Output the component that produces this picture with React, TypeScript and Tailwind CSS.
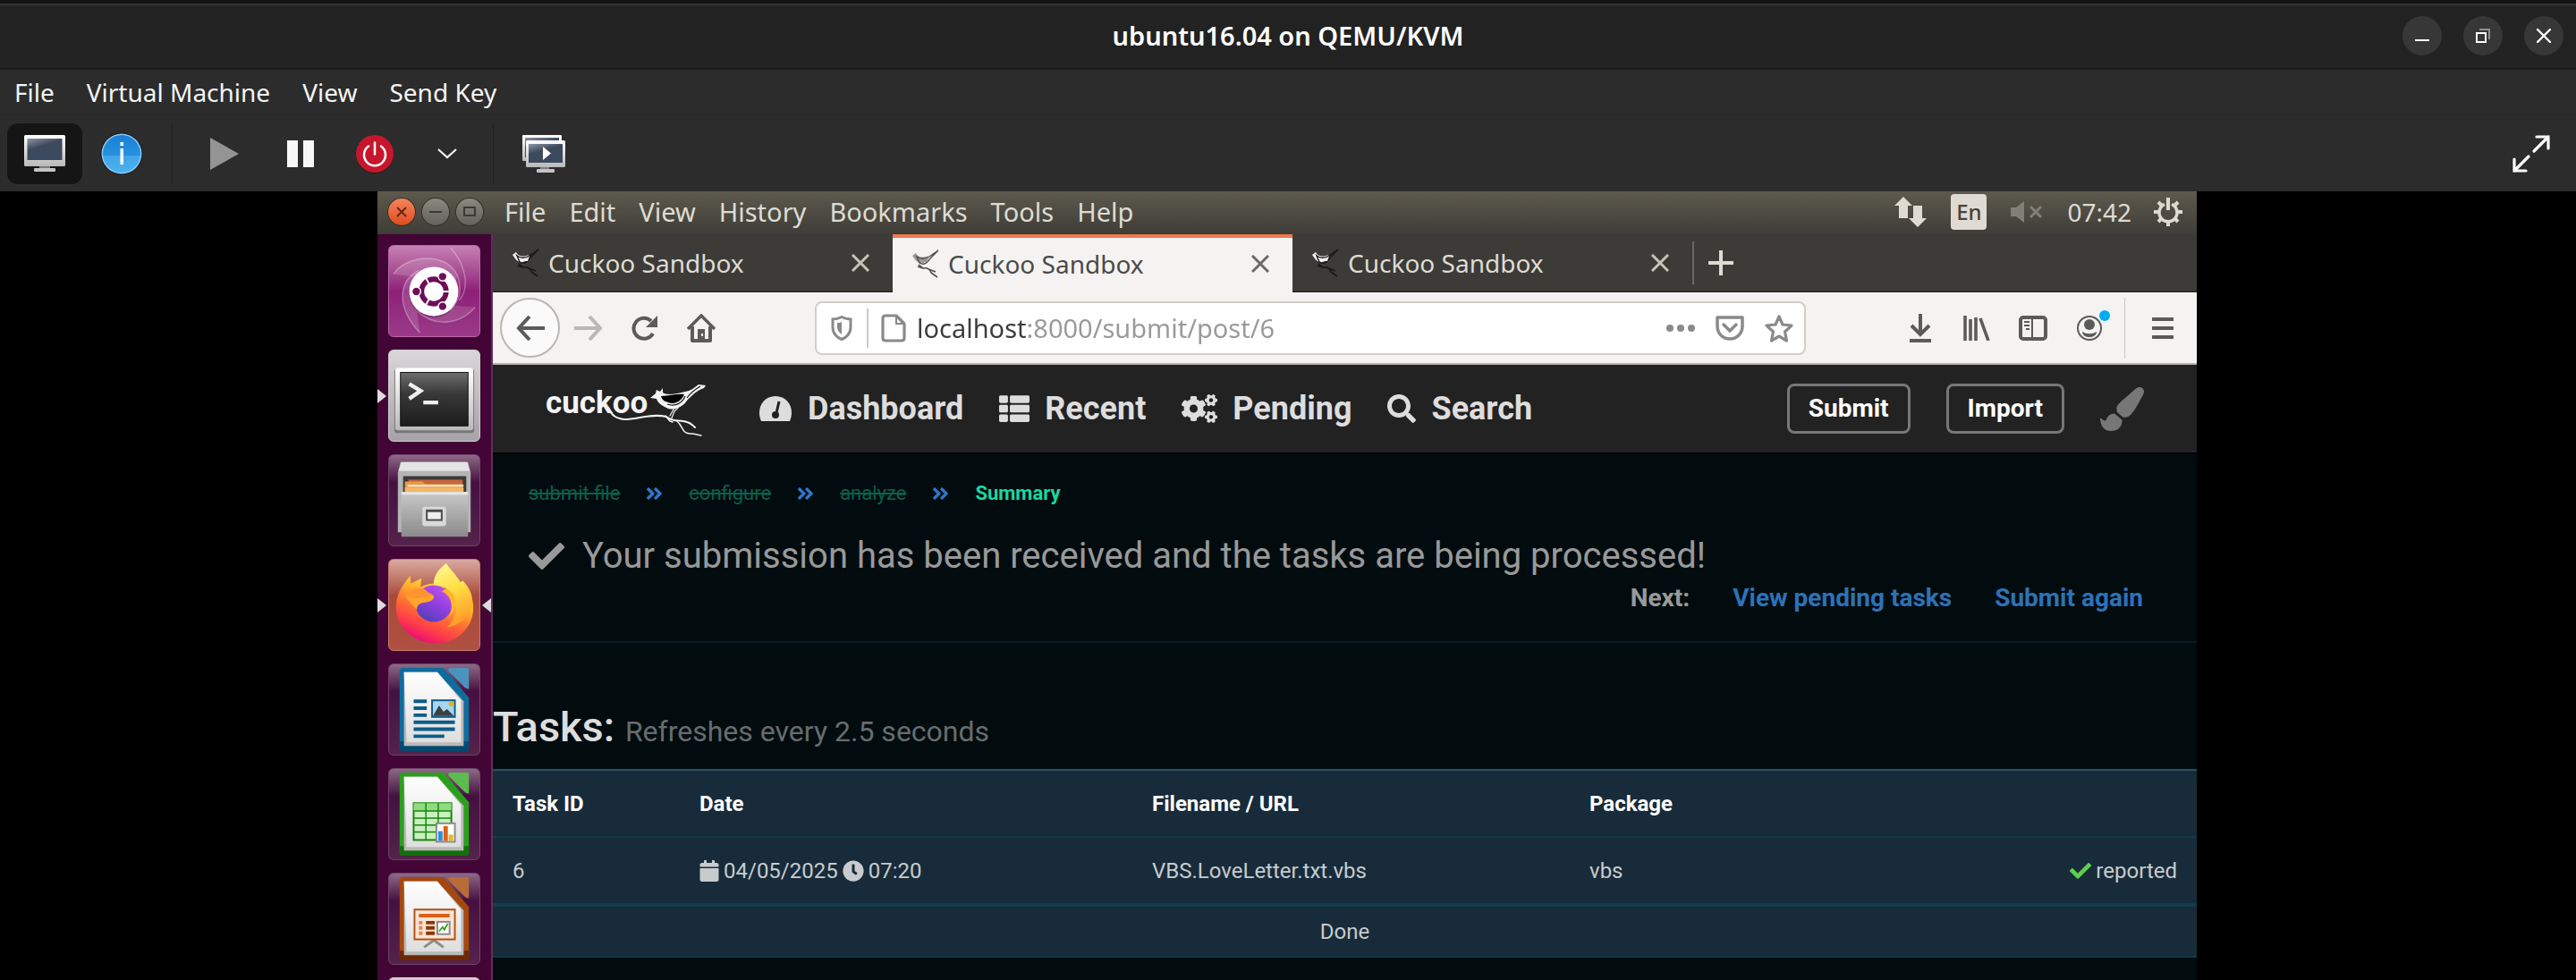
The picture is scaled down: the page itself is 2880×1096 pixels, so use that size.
import React from "react";
import {
  FaAngleDoubleRight,
  FaCalendar,
  FaCheck,
  FaClock,
  FaCogs,
  FaPaintBrush,
  FaSearch,
  FaThList,
} from "react-icons/fa";

/* ---------- host window icons ---------- */

function Gradients() {
  return (
    <svg className="absolute h-0 w-0" aria-hidden="true">
      <defs>
        <linearGradient id="frame" x1="0" y1="0" x2="0" y2="1">
          <stop offset="0" stopColor="#ffffff" />
          <stop offset="1" stopColor="#b9b9b9" />
        </linearGradient>
        <linearGradient id="screen" x1="0" y1="0" x2="0.5" y2="1">
          <stop offset="0" stopColor="#8d96a3" />
          <stop offset="0.4" stopColor="#465264" />
          <stop offset="0.45" stopColor="#3d495b" />
          <stop offset="1" stopColor="#3b4a61" />
        </linearGradient>
        <linearGradient id="info" x1="0" y1="0" x2="0" y2="1">
          <stop offset="0" stopColor="#1b7fd6" />
          <stop offset="0.54" stopColor="#2792e0" />
          <stop offset="0.56" stopColor="#42a5e8" />
          <stop offset="1" stopColor="#4db2ee" />
        </linearGradient>
        <linearGradient id="paper" x1="0" y1="0" x2="0" y2="1">
          <stop offset="0" stopColor="#ffffff" />
          <stop offset="1" stopColor="#dedede" />
        </linearGradient>
        <linearGradient id="steel" x1="0" y1="0" x2="0" y2="1">
          <stop offset="0" stopColor="#c9c9c9" />
          <stop offset="1" stopColor="#8a8a8a" />
        </linearGradient>
        <linearGradient id="term" x1="0" y1="0" x2="0" y2="1">
          <stop offset="0" stopColor="#6e6e6e" />
          <stop offset="0.4" stopColor="#383838" />
          <stop offset="1" stopColor="#1c1c1c" />
        </linearGradient>
        <linearGradient id="fox" x1="0.8" y1="0" x2="0.3" y2="1">
          <stop offset="0" stopColor="#fff36b" />
          <stop offset="0.35" stopColor="#ffb52c" />
          <stop offset="0.6" stopColor="#ff6a35" />
          <stop offset="0.8" stopColor="#ff3a4a" />
          <stop offset="1" stopColor="#e6087c" />
        </linearGradient>
        <linearGradient id="flame" x1="0" y1="0" x2="0.3" y2="1">
          <stop offset="0" stopColor="#fffb9a" />
          <stop offset="0.5" stopColor="#ffdf45" />
          <stop offset="1" stopColor="#ffa02a" />
        </linearGradient>
        <linearGradient id="globe" x1="0.8" y1="0" x2="0.2" y2="1">
          <stop offset="0" stopColor="#c452e8" />
          <stop offset="0.5" stopColor="#8f3fe0" />
          <stop offset="1" stopColor="#4a3fb0" />
        </linearGradient>
      </defs>
    </svg>
  );
}

function MonitorIcon() {
  return (
    <svg viewBox="0 0 48 42" className="h-[42px] w-12">
      <path d="M18 35h12v3H18z" fill="#7d7d7d" />
      <rect x="12" y="37" width="24" height="4" rx="1" fill="#c4c4c4" />
      <rect x="1" y="0" width="46" height="35" rx="1.500" fill="url(#frame)" />
      <rect x="4.500" y="4" width="39" height="24" fill="url(#screen)" />
    </svg>
  );
}

function InfoIcon() {
  return (
    <svg viewBox="0 0 48 48" className="size-12">
      <circle cx="24" cy="24" r="23.500" fill="#16191c" />
      <circle cx="24" cy="24" r="22.500" fill="#8cc7f1" />
      <circle cx="24" cy="24" r="21" fill="url(#info)" />
      <path d="M22.500 11h3.500v4h-3.500zM22.500 18h3.500v18h-3.500z" fill="#fff" />
    </svg>
  );
}

function PowerIcon() {
  return (
    <svg viewBox="0 0 44 44" className="size-11">
      <circle cx="22" cy="23" r="21" fill="#1d1d1d" />
      <circle cx="22" cy="22" r="21" fill="#c7162b" />
      <g fill="none" stroke="#fff" strokeWidth="2.500" strokeLinecap="round">
        <path d="M15 13.500a12 12 0 1 0 14 0" />
        <path d="M22 9.500v13" />
      </g>
    </svg>
  );
}

function MonitorsIcon() {
  return (
    <svg viewBox="0 0 48 42" className="h-[42px] w-12">
      <rect x="0" y="0" width="44" height="29" rx="1" fill="url(#frame)" />
      <rect x="3" y="3" width="38" height="22" fill="url(#screen)" />
      <path d="M20 36h10v3H20z" fill="#7d7d7d" />
      <rect x="16" y="38" width="20" height="4" rx="1" fill="#c4c4c4" />
      <rect x="4" y="6" width="44" height="30" rx="1.500" fill="url(#frame)" />
      <rect x="7" y="10" width="38" height="21" fill="url(#screen)" />
      <path d="M23 13l9 7.500-9 7.500z" fill="#fff" />
    </svg>
  );
}

/* ---------- bird drawings ---------- */

function CuckooLogo() {
  return (
    <svg viewBox="0 -3 182 62" className="h-[62px] w-[182px]" role="img" aria-label="cuckoo">
      <text x="0" y="33" fontFamily="Roboto" fontWeight="700" fontSize="35" fill="#f4f4f4">
        cuckoo
      </text>
      <g fill="none" stroke="#f4f4f4" strokeLinecap="round" strokeLinejoin="round">
        <path d="M70 27C74 36 79 39 88 40C103 40 118 33 135 37C144 44 150 40 158 43C162 44 165 47 167 49" strokeWidth="2" />
        <path d="M147 42C154 48 152 56 162 56C168 56 171 58 174 58M134 36l5 6 3 1" strokeWidth="1.500" />
        <path d="M148 27l-4 4-4 10M144 27l-5 9" strokeWidth="1.200" />
      </g>
      <path
        d="M117 16l6-5 1-4 4 2 3-4 0 5C136 14 146 11 156 9C162 8 166 5 171 1l8 1-2 3C168 8 163 14 158 19C153 27 143 30 137 28C130 25 125 21 124 17z"
        fill="#f4f4f4"
      />
      <path d="M129 14C138 14 147 11 155 12C152 20 143 24 137 21C133 20 130 18 129 14z" fill="#050505" />
      <path d="M136 23C145 26 153 22 156 14M158 16C163 9 168 6 173 3" fill="none" stroke="#151515" strokeWidth="1.200" />
    </svg>
  );
}

function Favicon({ active }: { active: boolean }) {
  const body = active ? "#9a9a9a" : "#f2f2f2";
  const dark = active ? "#4c4c4c" : "#171717";
  return (
    <svg viewBox="0 0 32 32" className="h-8 w-8 shrink-0" aria-hidden="true">
      <path d="M2 7l4-3 2 3c4 2 8 2 12 0-2 6-5 9-9 8-5-1-6-4-9-8z" fill={body} />
      <path d="M7 8c4 3 9 3 14 0l10-7-9 9c-3 5-7 8-12 5z" fill="none" stroke={dark} strokeWidth="1.400" />
      <path d="M9 17l5 4c6-1 8 2 9 5l7 5M14 21l-6-2M20 22l8 3" fill="none" stroke={dark} strokeWidth="1.600" />
      <path d="M10 14l7-2 4-4-2 6z" fill={body} />
    </svg>
  );
}

/* ---------- launcher icons, drawn on a 103 unit tile ---------- */

const tileSvg = "block h-full w-full";

function DashIcon() {
  return (
    <svg viewBox="0 0 103 103" className={tileSvg}>
      <g fill="none" stroke="#fff" strokeOpacity="0.300" strokeWidth="1.500">
        <path d="M5 32C20 10 66 6 78 34C84 50 80 62 70 74" />
        <path d="M70 2C88 22 92 48 80 62" />
        <path d="M35 99C8 70 10 40 34 28" />
        <path d="M98 70C78 92 50 92 32 74" />
      </g>
      <path d="M5 32C20 10 66 6 78 34L72 52 34 36z" fill="#fff" fillOpacity="0.150" />
      <path d="M35 99C8 70 10 40 34 28L30 60z" fill="#fff" fillOpacity="0.150" />
      <path d="M98 70C78 92 50 92 32 74l40-6z" fill="#fff" fillOpacity="0.120" />
      <circle cx="51" cy="54" r="28" fill="#000" fillOpacity="0.200" />
      <circle cx="51" cy="52" r="28" fill="#fff" />
      <circle cx="51" cy="52" r="14" fill="none" stroke="#6c0f58" strokeWidth="6" />
      <path d="M60 52h10M46 44l-5-9M46 60l-5 9" stroke="#fff" strokeWidth="2" />
      <g fill="#6c0f58" stroke="#fff" strokeWidth="1.500">
        <circle cx="31" cy="52" r="5" />
        <circle cx="61" cy="35" r="5" />
        <circle cx="61" cy="69" r="5" />
      </g>
    </svg>
  );
}

function TerminalIcon() {
  return (
    <svg viewBox="0 0 103 103" className={tileSvg}>
      <rect x="6" y="21" width="91" height="73" rx="3" fill="#777" />
      <rect x="7" y="20" width="89" height="71" rx="3" fill="url(#frame)" />
      <rect x="13" y="25" width="77" height="61" fill="url(#term)" stroke="#111" />
      <path d="M23 38l13 8-13 9" fill="none" stroke="#f0f0f0" strokeWidth="4.500" />
      <path d="M39 57h17v4.500H39z" fill="#f0f0f0" />
    </svg>
  );
}

function FilesIcon() {
  return (
    <svg viewBox="0 0 103 103" className={tileSvg}>
      <path d="M13 8h77l3 12v68H10V20z" fill="#b5b5b5" />
      <path d="M14 8h75l3 10H11z" fill="#e4e4e4" />
      <path d="M16 24h72v20H16z" fill="#3a3a3a" />
      <path d="M22 28h62v16H22z" fill="#c8643a" />
      <path d="M18 30h20l3 3h43v10H18z" fill="#e89a4c" />
      <path d="M21 34h64v2H21z" fill="#f5ead9" />
      <path d="M18 37h67v6H18z" fill="#f3b866" />
      <path d="M14 42h76v51H14z" fill="url(#steel)" />
      <path d="M14 42h76v3H14z" fill="#e6e6e6" />
      <rect x="38" y="59" width="27" height="22" rx="3" fill="#d9d9d9" />
      <rect x="42" y="62" width="19" height="13" fill="#4b4b4b" />
      <rect x="44" y="65" width="15" height="8" fill="#efefef" />
    </svg>
  );
}

function FirefoxIcon() {
  return (
    <svg viewBox="0 0 103 103" className={tileSvg}>
      <path
        d="M8 56C7 42 14 30 24 18l1 9 12-6-1 10C48 25 60 26 66 36L84 24C96 38 99 56 93 70C86 86 70 96 51 95C28 94 9 78 8 56z"
        fill="url(#fox)"
      />
      <path
        d="M65 4C52 14 50 24 51 30C62 28 68 34 70 40C80 50 78 66 66 77C84 74 94 62 95 48C95 38 90 30 84 24l1 9C80 20 72 14 65 4z"
        fill="url(#flame)"
      />
      <circle cx="51" cy="50" r="21" fill="url(#globe)" />
      <path d="M60 36c10 4 14 16 9 28 10-8 9-24-3-31z" fill="#ffb52c" />
      <path d="M18 42c10 2 18-4 33-1 1 5-5 7-12 8-5 1-8 4-7 8C26 52 24 47 18 42z" fill="#ffa62b" />
      <path d="M18 42C24 32 34 30 41 34c3 3 6 5 10 6-8 2-16 4-24 4z" fill="#ff9330" />
    </svg>
  );
}

function DocShape({ main, deep, fold }: { main: string; deep: string; fold: string }) {
  return (
    <>
      <path d="M16 4h46l29 34v57q0 4-4 4H16q-4 0-4-4V8q0-4 4-4z" fill={main} />
      <path d="M12 88h79v7q0 4-4 4H16q-4 0-4-4z" fill={deep} />
      <path d="M70 4h19q2 0 2 2v22q-3 0-5-2L68 8q-2-4 2-4z" fill={fold} />
      <path d="M17 9h38l30 33v51H17z" fill="#b9b9b9" />
      <path d="M17 9h38l27 32v48H20z" fill="url(#paper)" />
    </>
  );
}

function WriterIcon() {
  return (
    <svg viewBox="0 0 103 103" className={tileSvg}>
      <DocShape main="#0e6c9e" deep="#044a70" fold="#4a93bd" />
      <path d="M28 40h15v4H28zM28 48h15v4H28zM28 56h15v4H28zM28 64h47v4H28zM28 72h47v4H28zM28 80h35v4H28z" fill="#0b5c88" />
      <rect x="49" y="41" width="26" height="19" fill="#a5d5f2" stroke="#0b5c88" strokeWidth="2" />
      <path d="M50 59l7-12 5 7 4-3 8 8z" fill="#3f3f3f" />
      <circle cx="71" cy="45" r="3" fill="#d9b32e" />
    </svg>
  );
}

function CalcIcon() {
  return (
    <svg viewBox="0 0 103 103" className={tileSvg}>
      <DocShape main="#2ba01c" deep="#12700a" fold="#5dbb4f" />
      <rect x="28" y="39" width="43" height="42" fill="#c9f0bf" stroke="#17850d" strokeWidth="2" />
      <path d="M28 39h43v9H28z" fill="#8edb80" />
      <path d="M28 48h43M28 56h43M28 64h43M28 72h43M42 39v42M56 39v42" stroke="#17850d" strokeWidth="1.500" fill="none" />
      <rect x="54" y="62" width="21" height="21" fill="#fff" stroke="#8a8a8a" strokeWidth="2" />
      <path d="M56 71h5v11h-5z" fill="#2f8fd8" />
      <path d="M62 65h5v17h-5z" fill="#e06018" />
      <path d="M68 75h5v7h-5z" fill="#e8b820" />
    </svg>
  );
}

function ImpressIcon() {
  return (
    <svg viewBox="0 0 103 103" className={tileSvg}>
      <DocShape main="#a5480f" deep="#6b2a02" fold="#b86c3a" />
      <path d="M51 76l-11 8M51 76l11 8" stroke="#8d8d8d" strokeWidth="3" />
      <rect x="29" y="41" width="46" height="34" fill="#fbe4d6" stroke="#b44f12" strokeWidth="2" />
      <path d="M34 46h35v4H34z" fill="#d95e16" />
      <path d="M34 54h4v4h-4zM34 60h4v4h-4zM34 66h4v4h-4z" fill="#e4844c" />
      <path d="M42 54h10v4H42zM42 60h10v4H42zM42 66h10v4H42z" fill="#8a3606" />
      <rect x="55" y="55" width="14" height="14" fill="#fff" stroke="#8a8a8a" strokeWidth="2" />
      <path d="M57 66l4-5 2 3 4-7" fill="none" stroke="#32a020" strokeWidth="1.800" />
    </svg>
  );
}

type Launch = {
  name: string;
  icon: React.ReactNode;
  tile: string;
  running?: boolean;
  focused?: boolean;
};

const glass = "bg-linear-to-b from-[#8d6a87] via-[#451040] via-30% to-[#54224b] border-[#6d4567]";

const launchers: Launch[] = [
  { name: "Search your computer", icon: <DashIcon />, tile: "bg-linear-to-b from-[#c67fb4] via-[#8e1f78] via-50% to-[#9a3a88] border-[#b868a8]" },
  { name: "Terminal", icon: <TerminalIcon />, tile: "bg-linear-to-b from-[#dad7da] to-[#a7a2a8] border-[#d0ccd0]", running: true },
  { name: "Files", icon: <FilesIcon />, tile: glass },
  { name: "Firefox Web Browser", icon: <FirefoxIcon />, tile: "bg-linear-to-b from-[#d9aaa0] via-[#a84a3a] via-40% to-[#b05042] border-[#c47b6c]", running: true, focused: true },
  { name: "LibreOffice Writer", icon: <WriterIcon />, tile: glass },
  { name: "LibreOffice Calc", icon: <CalcIcon />, tile: glass },
  { name: "LibreOffice Impress", icon: <ImpressIcon />, tile: glass },
  { name: "Ubuntu Software", icon: null, tile: "bg-[#d8c4d2] border-[#e0d0dc]" },
];

function Launcher() {
  return (
    <aside className="flex w-[129px] shrink-0 flex-col gap-[14px] overflow-hidden border-r-2 border-[#5e2f57] bg-[#420535] pt-3">
      {launchers.map((l) => (
        <div key={l.name} className="relative flex shrink-0 pl-3">
          {l.running && (
            <svg viewBox="0 0 10 16" className="absolute top-11 left-0 h-4 w-[10px]">
              <path d="M0 0l10 8-10 8z" fill="#dcdcdc" />
            </svg>
          )}
          <button type="button" aria-label={l.name} className={`size-[103px] overflow-hidden rounded-md border ${l.tile}`}>
            {l.icon}
          </button>
          {l.focused && (
            <svg viewBox="0 0 10 16" className="absolute top-11 right-0 h-4 w-[10px]">
              <path d="M10 0L0 8l10 8z" fill="#dcdcdc" />
            </svg>
          )}
        </div>
      ))}
    </aside>
  );
}

/* ---------- host chrome ---------- */

const roundBtn = "flex size-11 items-center justify-center rounded-full bg-[#373737]";

function HostTitleBar() {
  return (
    <header className="grid h-[78px] shrink-0 grid-cols-[1fr_auto_1fr] items-center border-t-4 border-b-2 border-t-[#141414] border-b-[#1a1a1a] bg-[#222] shadow-[inset_0_2px_0_#333]">
      <span />
      <h1 className="text-[29px] leading-10 font-semibold text-white">ubuntu16.04 on QEMU/KVM</h1>
      <div className="flex justify-end gap-6 pr-[14px]">
        <button type="button" aria-label="Minimize" className={roundBtn}>
          <svg viewBox="0 0 16 16" className="size-4">
            <path d="M0 12h16v2H0z" fill="#fff" />
          </svg>
        </button>
        <button type="button" aria-label="Restore" className={roundBtn}>
          <svg viewBox="0 0 16 16" className="size-4">
            <path d="M4 0h12v12h-2V2H4z" fill="#8f8f8f" />
            <path d="M1 5h10v10H1z" fill="none" stroke="#fff" strokeWidth="2" />
          </svg>
        </button>
        <button type="button" aria-label="Close" className={roundBtn}>
          <svg viewBox="0 0 16 16" className="size-4">
            <path d="M1 1l14 14M15 1L1 15" stroke="#fff" strokeWidth="2.400" strokeLinecap="round" />
          </svg>
        </button>
      </div>
    </header>
  );
}

function HostMenu() {
  return (
    <nav className="flex h-[52px] shrink-0 items-center gap-9 border-b-2 border-[#282828] bg-[#2c2c2c] pl-4 text-[28px] leading-9 text-[#f4f4f4]">
      {["File", "Virtual Machine", "View", "Send Key"].map((m) => (
        <button key={m} type="button">
          {m}
        </button>
      ))}
    </nav>
  );
}

function HostToolbar() {
  return (
    <div className="flex h-[84px] shrink-0 items-center bg-[#2c2c2c] pr-7 pl-2">
      <button type="button" aria-label="Show the graphical console" className="flex h-[68px] w-[84px] items-center justify-center rounded-xl bg-[#151515]">
        <MonitorIcon />
      </button>
      <button type="button" aria-label="Show virtual hardware details" className="ml-5">
        <InfoIcon />
      </button>
      <span className="ml-8 h-[68px] w-px bg-[#222]" />
      <button type="button" aria-label="Run" className="ml-[42px]">
        <svg viewBox="0 0 32 36" className="h-9 w-8">
          <path d="M0 0l32 18L0 36z" fill="#949494" />
        </svg>
      </button>
      <button type="button" aria-label="Pause" className="ml-[54px]">
        <svg viewBox="0 0 30 30" className="size-[30px]">
          <path d="M0 0h12v30H0zM18 0h12v30H18z" fill="#f7f7f7" />
        </svg>
      </button>
      <button type="button" aria-label="Shut down" className="ml-[46px]">
        <PowerIcon />
      </button>
      <button type="button" aria-label="Shut down options" className="ml-12">
        <svg viewBox="0 0 22 12" className="h-3 w-[22px]">
          <path d="M1 1l10 9L21 1" fill="none" stroke="#f4f4f4" strokeWidth="2.200" />
        </svg>
      </button>
      <span className="ml-10 h-[68px] w-px bg-[#222]" />
      <button type="button" aria-label="Manage snapshots" className="ml-8">
        <MonitorsIcon />
      </button>
      <button type="button" aria-label="Fullscreen" className="ml-auto">
        <svg viewBox="0 0 44 44" className="size-11">
          <g fill="none" stroke="#fff" strokeWidth="3.200" strokeLinecap="round" strokeLinejoin="miter">
            <path d="M28 3h13v13M41 3L25 19" />
            <path d="M3 28v13h13M3 41l16-16" />
          </g>
        </svg>
      </button>
    </div>
  );
}

/* ---------- guest desktop ---------- */

const guestBtn = "flex size-[30px] items-center justify-center rounded-full shadow-[0_0_0_1px_#2f2e29]";

function GuestPanel() {
  return (
    <div className="flex h-12 shrink-0 items-center bg-linear-to-b from-[#5d5a4d] to-[#3e3d38] pr-4 pb-[2px] pl-3 text-[#dfdbd2]">
      <div className="flex gap-2">
        <button type="button" aria-label="Close" className={`${guestBtn} bg-linear-to-b from-[#f4845c] to-[#dd4a19]`}>
          <svg viewBox="0 0 12 12" className="size-3">
            <path d="M1 1l10 10M11 1L1 11" stroke="#6a240c" strokeWidth="2" />
          </svg>
        </button>
        <button type="button" aria-label="Minimize" className={`${guestBtn} bg-linear-to-b from-[#8a8880] to-[#63625b]`}>
          <svg viewBox="0 0 14 12" className="h-3 w-[14px]">
            <path d="M0 6h14" stroke="#3a3934" strokeWidth="2" />
          </svg>
        </button>
        <button type="button" aria-label="Maximize" className={`${guestBtn} bg-linear-to-b from-[#8a8880] to-[#63625b]`}>
          <svg viewBox="0 0 14 12" className="h-3 w-[14px]">
            <path d="M1 1h12v9H1z" fill="none" stroke="#3a3934" strokeWidth="2" />
          </svg>
        </button>
      </div>
      <nav className="ml-6 flex gap-[26px] text-[29px] leading-10">
        {["File", "Edit", "View", "History", "Bookmarks", "Tools", "Help"].map((m) => (
          <button key={m} type="button">
            {m}
          </button>
        ))}
      </nav>
      <div className="ml-auto flex items-center gap-[25px]">
        <div className="flex items-center gap-[27px]">
          <svg viewBox="0 0 36 34" className="h-[34px] w-9" aria-label="Network">
            <path d="M10 0l10 10h-5v14H5V10H0zM26 34L16 24h5V10h10v14h5z" fill="#dfdbd2" />
          </svg>
          <span className="flex h-10 w-10 items-center justify-center rounded bg-[#dfdbd2] text-[24px] leading-10 font-medium text-[#45443e]">En</span>
          <svg viewBox="0 0 36 24" className="h-6 w-9" aria-label="Sound muted">
            <path d="M0 7h6l9-7v24l-9-7H0z" fill="#827f77" />
            <path d="M22 6l12 12M34 6L22 18" stroke="#827f77" strokeWidth="3" />
          </svg>
          <time className="text-[28px] leading-10">07:42</time>
        </div>
        <svg viewBox="0 0 32 32" className="size-8" aria-label="System">
          <g fill="none" stroke="#dfdbd2">
            <path d="M12 7.500a10 10 0 1 0 8 0" strokeWidth="3.500" />
            <path d="M16 0v14" strokeWidth="4" />
            <path d="M0 16h6M26 16h6M16 26v6M5 5l4 4M27 5l-4 4M5 27l4-4M27 27l-4-4" strokeWidth="4" />
          </g>
        </svg>
      </div>
    </div>
  );
}

function TabStrip() {
  return (
    <div className="flex h-[65px] shrink-0 items-stretch bg-[#3c3b37]">
      {[0, 1, 2].map((i) => {
        const active = i === 1;
        return (
          <div
            key={i}
            className={
              active
                ? "flex w-[447px] items-center border-t-4 border-[#f2784b] bg-[#f4f3f1] pr-[26px] pb-1 pl-5 text-[#4a4a4a]"
                : "flex w-[447px] items-center border-b-2 border-[#2c2b28] pr-[26px] pl-5 text-[#dfdbd2]"
            }
          >
            <Favicon active={active} />
            <button type="button" className="ml-[10px] flex-1 text-left text-[28px] leading-10">
              Cuckoo Sandbox
            </button>
            <button type="button" aria-label="Close tab">
              <svg viewBox="0 0 20 20" className="size-5">
                <path d="M1 1l18 18M19 1L1 19" stroke={active ? "#6a6a6a" : "#c8c3ba"} strokeWidth="3" />
              </svg>
            </button>
          </div>
        );
      })}
      <div className="flex flex-1 items-center border-b-2 border-[#2c2b28]">
        <span className="h-12 w-[2px] bg-[#6a6963]" />
        <button type="button" aria-label="New tab" className="ml-4">
          <svg viewBox="0 0 28 28" className="size-7">
            <path d="M14 0v28M0 14h28" stroke="#dfdbd2" strokeWidth="4" />
          </svg>
        </button>
      </div>
    </div>
  );
}

const toolBtn = "flex w-[63px] shrink-0 items-center justify-center";

function BrowserToolbar() {
  return (
    <div className="flex h-[81px] shrink-0 items-center border-b-2 border-[#b5b2ad] bg-[#f4f3f1] pl-2">
      <button type="button" aria-label="Back" className="flex size-[67px] items-center justify-center rounded-full border-2 border-[#b9b7b4] bg-[#fafafa]">
        <svg viewBox="0 0 32 28" className="h-7 w-8">
          <path d="M15 1L3 14l12 13M3 14h29" fill="none" stroke="#5b5b5b" strokeWidth="4" />
        </svg>
      </button>
      <button type="button" aria-label="Forward" className={toolBtn}>
        <svg viewBox="0 0 32 28" className="h-7 w-8">
          <path d="M17 1l12 13-12 13M29 14H0" fill="none" stroke="#b9b8b6" strokeWidth="4" />
        </svg>
      </button>
      <button type="button" aria-label="Reload" className={toolBtn}>
        <svg viewBox="0 0 30 28" className="h-7 w-[30px]">
          <path d="M24 20A11.500 11.500 0 1 1 22 6" fill="none" stroke="#5b5b5b" strokeWidth="4" />
          <path d="M29 0v13H16z" fill="#5b5b5b" />
        </svg>
      </button>
      <button type="button" aria-label="Home" className={toolBtn}>
        <svg viewBox="0 0 32 32" className="size-8">
          <path d="M1 17L16 2l15 15" fill="none" stroke="#5b5b5b" strokeWidth="3.500" />
          <path d="M6 14v16h20V14" fill="none" stroke="#5b5b5b" strokeWidth="4" strokeLinejoin="round" />
          <path d="M12 17h8v14h-8z" fill="#5b5b5b" />
          <path d="M16 22h2v3h-2z" fill="#f4f3f1" />
        </svg>
      </button>
      <div className="ml-24 flex h-[60px] min-w-0 flex-1 items-center rounded-lg border-2 border-[#d3cdc7] bg-white pr-3 pl-4">
        <svg viewBox="0 0 24 28" className="h-7 w-6 shrink-0" aria-hidden="true">
          <path d="M12 1.500c4 2 7 2.500 10 2.500v9c0 7-5 12-10 13.500C7 25 2 20 2 13V4c3 0 6-.500 10-2.500z" fill="none" stroke="#8a8a8a" strokeWidth="3" />
          <path d="M12 7v14c-3-2-5-5-5-8V8c2 0 3 0 5-1z" fill="#8a8a8a" />
        </svg>
        <span className="ml-4 h-11 w-[2px] shrink-0 bg-[#cfcac4]" />
        <svg viewBox="0 0 28 32" className="ml-[14px] h-8 w-7 shrink-0" aria-hidden="true">
          <path d="M5 2h12l9 9v16q0 3-3 3H5q-3 0-3-3V5q0-3 3-3z" fill="none" stroke="#8a8a8a" strokeWidth="3.200" strokeLinejoin="round" />
          <path d="M17 2v9h9" fill="none" stroke="#8a8a8a" strokeWidth="2" />
        </svg>
        <input
          type="text"
          aria-label="Address"
          defaultValue="localhost:8000/submit/post/6"
          className="ml-3 h-12 min-w-0 flex-1 bg-[linear-gradient(90deg,#3c3c3c_122px,#999_122px)] bg-clip-text text-[29px] leading-10 text-transparent outline-none"
        />
        <div className="flex shrink-0 items-center gap-[23px]">
          <button type="button" aria-label="Page actions">
            <svg viewBox="0 0 32 8" className="h-2 w-8">
              <g fill="#8a8a8a">
                <circle cx="4" cy="4" r="4" />
                <circle cx="16" cy="4" r="4" />
                <circle cx="28" cy="4" r="4" />
              </g>
            </svg>
          </button>
          <button type="button" aria-label="Save to Pocket">
            <svg viewBox="0 0 32 28" className="h-7 w-8">
              <path d="M2 2h28v10a14 14 0 0 1-28 0z" fill="none" stroke="#8a8a8a" strokeWidth="3.500" strokeLinejoin="round" />
              <path d="M9 10l7 7 7-7" fill="none" stroke="#8a8a8a" strokeWidth="3.500" strokeLinecap="round" />
            </svg>
          </button>
          <button type="button" aria-label="Bookmark this page">
            <svg viewBox="0 0 32 32" className="size-8">
              <path d="M16 3l4 9 10 1-7.500 7 2 10L16 25l-8.500 5 2-10L2 13l10-1z" fill="none" stroke="#8a8a8a" strokeWidth="3.200" strokeLinejoin="round" />
            </svg>
          </button>
        </div>
      </div>
      <div className="ml-24 flex shrink-0 items-center">
        <button type="button" aria-label="Downloads" className={toolBtn}>
          <svg viewBox="0 0 24 32" className="h-8 w-6">
            <path d="M12 0v22M2 13l10 10 10-10" fill="none" stroke="#5b5b5b" strokeWidth="4" />
            <path d="M0 28h24v4H0z" fill="#5b5b5b" />
          </svg>
        </button>
        <button type="button" aria-label="Library" className={toolBtn}>
          <svg viewBox="0 0 30 28" className="h-7 w-[30px]">
            <path d="M2 0v28M8 4v24M14 2v26M19 3l9 25" fill="none" stroke="#5b5b5b" strokeWidth="3.600" />
          </svg>
        </button>
        <button type="button" aria-label="Sidebars" className={toolBtn}>
          <svg viewBox="0 0 32 28" className="h-7 w-8">
            <rect x="2" y="2" width="28" height="24" rx="3" fill="none" stroke="#5b5b5b" strokeWidth="4" />
            <path d="M15 2v24M6 7h6M6 11h6M8 15h4" stroke="#5b5b5b" strokeWidth="2" />
          </svg>
        </button>
        <button type="button" aria-label="Account" className={`${toolBtn} relative`}>
          <svg viewBox="0 0 28 28" className="size-7">
            <circle cx="14" cy="14" r="13" fill="none" stroke="#5b5b5b" strokeWidth="2" />
            <circle cx="14" cy="10" r="6" fill="#5b5b5b" />
            <path d="M6 18c5 3 11 3 16 0 0 8-16 8-16 0z" fill="#5b5b5b" />
          </svg>
          <span className="absolute -top-[6px] right-2 size-3 rounded-full bg-[#00adf5]" />
        </button>
        <span className="ml-2 h-[68px] w-px bg-[#c9c7c4]" />
        <button type="button" aria-label="Open menu" className="mr-[26px] ml-[30px]">
          <svg viewBox="0 0 24 24" className="size-6">
            <path d="M0 2h24M0 12h24M0 22h24" stroke="#5b5b5b" strokeWidth="4" />
          </svg>
        </button>
      </div>
    </div>
  );
}

/* ---------- Cuckoo web page ---------- */

function GaugeIcon() {
  return (
    <svg viewBox="0 0 38 28" className="h-7 w-[38px]" aria-hidden="true">
      <path d="M3 28C-3 14 5 0 19 0s22 14 16 28z" fill="#ddd" />
      <path d="M23 6l-3 13" stroke="#222" strokeWidth="3" />
      <circle cx="19" cy="21" r="4" fill="#222" />
    </svg>
  );
}

const navLink = "flex items-center gap-[17px]";
const outlineBtn = "rounded-lg border-[3px] border-[#777] px-[21px] py-[7px] text-[28px] leading-9 font-bold text-white";

function SiteNav() {
  return (
    <header className="flex h-[100px] shrink-0 items-center border-b-2 border-black bg-[#222] px-[59px] text-[#ddd]">
      <a href="#home">
        <CuckooLogo />
      </a>
      <nav className="ml-14 flex items-center gap-10 text-[36px] leading-10 font-bold">
        <a href="#dashboard" className={navLink}>
          <GaugeIcon />
          Dashboard
        </a>
        <a href="#recent" className={navLink}>
          <FaThList className="h-[34px] w-[34px]" />
          Recent
        </a>
        <a href="#pending" className={navLink}>
          <FaCogs className="h-8 w-10" />
          Pending
        </a>
        <a href="#search" className={navLink}>
          <FaSearch className="h-8 w-8" />
          Search
        </a>
      </nav>
      <div className="ml-auto flex items-center gap-10">
        <button type="button" className={outlineBtn}>
          Submit
        </button>
        <button type="button" className={outlineBtn}>
          Import
        </button>
        <button type="button" aria-label="Theme">
          <FaPaintBrush className="h-[49px] w-[49px] text-[#777]" />
        </button>
      </div>
    </header>
  );
}

function Breadcrumb() {
  return (
    <ol className="flex items-center gap-[29px] text-[22px] leading-7">
      {["submit file", "configure", "analyze"].map((s) => (
        <React.Fragment key={s}>
          <li className="text-[#0b5f4b] line-through">{s}</li>
          <li aria-hidden="true">
            <FaAngleDoubleRight className="h-[22px] w-[19px] text-[#2f76c8]" />
          </li>
        </React.Fragment>
      ))}
      <li className="font-bold text-[#1bd6a0]">Summary</li>
    </ol>
  );
}

const th = "px-[22px] text-left font-bold text-white";
const td = "px-[22px]";

function TaskTable() {
  return (
    <table className="w-full table-fixed border-collapse bg-[#172b3a] text-[24px] leading-8 text-[#c8cbcd]">
      <thead>
        <tr className="h-[75px] border-t-2 border-b-2 border-t-[#24546a] border-b-[#143848]">
          <th className={`w-[209px] ${th}`}>Task ID</th>
          <th className={`w-[506px] ${th}`}>Date</th>
          <th className={`w-[489px] ${th}`}>Filename / URL</th>
          <th className={th}>Package</th>
          <th className={th} aria-label="Status" />
        </tr>
      </thead>
      <tbody>
        <tr className="h-[76px] border-b-4 border-[#143c4c]">
          <td className={td}>6</td>
          <td className={td}>
            <span className="flex items-center gap-[5px]">
              <FaCalendar className="h-6 w-[22px]" />
              04/05/2025
              <FaClock className="size-6" />
              07:20
            </span>
          </td>
          <td className={td}>VBS.LoveLetter.txt.vbs</td>
          <td className={td}>vbs</td>
          <td className={td}>
            <span className="flex items-center justify-end gap-[5px]">
              <FaCheck className="size-6 text-[#5fcf4a]" />
              reported
            </span>
          </td>
        </tr>
      </tbody>
      <tfoot>
        <tr className="h-[58px] border-b-2 border-[#143848]">
          <td colSpan={5} className="text-center">
            Done
          </td>
        </tr>
      </tfoot>
    </table>
  );
}

function SitePage() {
  return (
    <main className="flex min-h-0 flex-1 flex-col bg-[#020c0f] font-['Roboto',sans-serif]">
      <SiteNav />
      <section className="border-b-2 border-[#061c24] px-10 py-[30px]">
        <Breadcrumb />
        <h2 className="mt-8 flex items-center gap-5 text-[40px] leading-[48px] text-[#999]">
          <FaCheck className="size-10" />
          Your submission has been received and the tasks are being processed!
        </h2>
        <div className="mt-[5px] flex justify-end gap-12 pr-5 text-[28px] leading-9 font-bold">
          <span className="text-[#999]">Next:</span>
          <a href="#pending" className="text-[#2d72b8]">
            View pending tasks
          </a>
          <a href="#submit" className="text-[#2d72b8]">
            Submit again
          </a>
        </div>
      </section>
      <section className="pt-16">
        <h3 className="mb-3 text-[47px] leading-[60px] font-medium text-[#ddd]">
          Tasks: <small className="text-[32px] font-normal text-[#686c6d]">Refreshes every 2.5 seconds</small>
        </h3>
        <TaskTable />
      </section>
    </main>
  );
}

export default function App() {
  return (
    <div className="flex h-screen flex-col overflow-hidden bg-black font-['Noto_Sans',sans-serif]">
      <Gradients />
      <HostTitleBar />
      <HostMenu />
      <HostToolbar />
      <div className="flex min-h-0 flex-1 flex-col overflow-hidden pr-[424px] pl-[422px]">
        <GuestPanel />
        <div className="flex min-h-0 flex-1">
          <Launcher />
          <div className="flex min-w-0 flex-1 flex-col overflow-hidden">
            <TabStrip />
            <BrowserToolbar />
            <SitePage />
          </div>
        </div>
      </div>
    </div>
  );
}
